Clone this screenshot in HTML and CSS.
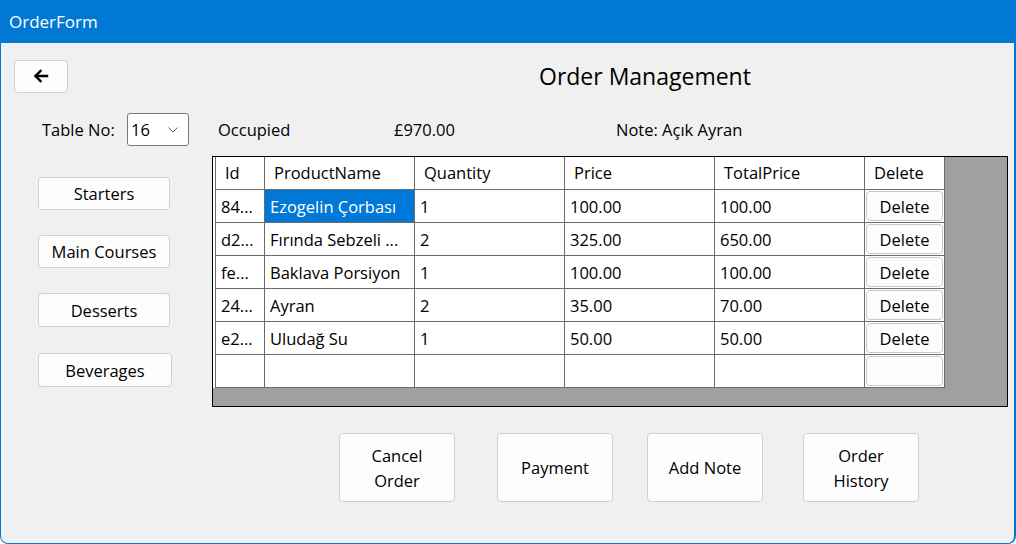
FILE: index.html
```html
<!DOCTYPE html>
<html>
<head>
<meta charset="utf-8">
<link rel="stylesheet" href="styles.css">
</head>
<body>
<div class="window">
  <div class="titlebar">OrderForm</div>
  <div class="client">
    <div class="top-row">
      <button class="btn back-btn" aria-label="Back">
        <svg width="16" height="14" viewBox="0 0 16 14"><path d="M14 7H2.5M7.5 2L2.5 7L7.5 12" fill="none" stroke="#000" stroke-width="2.4" stroke-linecap="square"/></svg>
      </button>
      <h1 class="title">Order Management</h1>
    </div>
    <div class="info-row">
      <span class="label">Table No:</span>
      <div class="combo">
        <span>16</span>
        <svg width="10" height="6" viewBox="0 0 10 6"><path d="M0.5 0.5L5 5L9.5 0.5" fill="none" stroke="#606060" stroke-width="1"/></svg>
      </div>
      <span class="status">Occupied</span>
      <span class="amount">£970.00</span>
      <span class="note">Note: Açık Ayran</span>
    </div>
    <div class="main">
      <div class="categories">
        <button class="btn cat">Starters</button>
        <button class="btn cat">Main Courses</button>
        <button class="btn cat tall">Desserts</button>
        <button class="btn cat tall wide">Beverages</button>
      </div>
      <div class="grid-box">
        <div class="grid">
          <div class="cell hd first">Id</div>
          <div class="cell hd">ProductName</div>
          <div class="cell hd">Quantity</div>
          <div class="cell hd">Price</div>
          <div class="cell hd">TotalPrice</div>
          <div class="cell hd">Delete</div>

          <div class="cell first">84...</div>
          <div class="cell sel">Ezogelin Çorbası</div>
          <div class="cell">1</div>
          <div class="cell">100.00</div>
          <div class="cell">100.00</div>
          <div class="cell btncell"><button class="btn del">Delete</button></div>

          <div class="cell first">d2...</div>
          <div class="cell">Fırında Sebzeli ...</div>
          <div class="cell">2</div>
          <div class="cell">325.00</div>
          <div class="cell">650.00</div>
          <div class="cell btncell"><button class="btn del">Delete</button></div>

          <div class="cell first">fe...</div>
          <div class="cell">Baklava Porsiyon</div>
          <div class="cell">1</div>
          <div class="cell">100.00</div>
          <div class="cell">100.00</div>
          <div class="cell btncell"><button class="btn del">Delete</button></div>

          <div class="cell first">24...</div>
          <div class="cell">Ayran</div>
          <div class="cell">2</div>
          <div class="cell">35.00</div>
          <div class="cell">70.00</div>
          <div class="cell btncell"><button class="btn del">Delete</button></div>

          <div class="cell first">e2...</div>
          <div class="cell">Uludağ Su</div>
          <div class="cell">1</div>
          <div class="cell">50.00</div>
          <div class="cell">50.00</div>
          <div class="cell btncell"><button class="btn del">Delete</button></div>

          <div class="cell first"></div>
          <div class="cell"></div>
          <div class="cell"></div>
          <div class="cell"></div>
          <div class="cell"></div>
          <div class="cell btncell"><button class="btn del"></button></div>
        </div>
      </div>
    </div>
    <div class="actions">
      <button class="btn act">Cancel<br>Order</button>
      <button class="btn act">Payment</button>
      <button class="btn act">Add Note</button>
      <button class="btn act">Order<br>History</button>
    </div>
  </div>
</div>
</body>
</html>
```

FILE: styles.css
```css
html, body {
  margin: 0;
  padding: 0;
  background: #ffffff;
}
body {
  font-family: "Open Sans", "Noto Sans", "Liberation Sans", sans-serif;
  color: #000;
}
.window {
  width: 1016px;
  height: 544px;
  box-sizing: border-box;
  background: #f0f0f0;
  border: 1px solid #0078d4;
  border-top: none;
  border-right-width: 2px;
  border-radius: 0 0 8px 8px;
  overflow: hidden;
  display: flex;
  flex-direction: column;
}
.titlebar {
  height: 43px;
  flex: 0 0 43px;
  background: #0078d4;
  color: #fff;
  font-size: 17px;
  line-height: 43px;
  padding-left: 9px;
  margin: 0 -2px 0 -1px;
}
.client {
  padding: 17px 0 0 13px;
  display: flex;
  flex-direction: column;
}
.btn {
  font-family: inherit;
  font-size: 16.5px;
  color: #000;
  background: #fdfdfd;
  border: 1px solid #d0d0d0;
  border-radius: 4px;
  padding: 0;
  margin: 0;
  box-sizing: border-box;
  display: flex;
  align-items: center;
  justify-content: center;
  text-align: center;
}
.top-row {
  display: flex;
  align-items: center;
  height: 32px;
}
.back-btn {
  width: 54px;
  height: 33px;
}
.title {
  margin: 0 0 0 471px;
  font-weight: normal;
  font-size: 23px;
  line-height: 32px;
}
.info-row {
  display: flex;
  align-items: center;
  height: 33px;
  margin-top: 21px;
  font-size: 16.5px;
}
.label {
  margin-left: 28px;
  width: 85px;
}
.combo {
  width: 62px;
  height: 33px;
  box-sizing: border-box;
  border: 1px solid #7a7a7a;
  border-radius: 3px;
  background: #fff;
  display: flex;
  align-items: center;
  justify-content: space-between;
  padding: 0 10px 0 3px;
}
.combo svg { margin-top: 1px; }
.status {
  margin-left: 29px;
  width: 176px;
}
.amount {
  width: 222px;
}
.main {
  display: flex;
  margin-top: 10px;
}
.categories {
  width: 198px;
  padding: 21px 0 0 24px;
  box-sizing: border-box;
  display: flex;
  flex-direction: column;
  gap: 25px;
}
.cat {
  width: 132px;
  height: 33px;
}
.cat.tall { height: 34px; }
.cat.tall.wide { width: 134px; }
.categories .cat:nth-child(4) { margin-top: 1px; }
.grid-box {
  width: 796px;
  height: 251px;
  box-sizing: border-box;
  border: 1px solid #000;
  background: #a0a0a0;
}
.grid {
  display: grid;
  grid-template-columns: 50px 150px 150px 150px 150px 80px;
  grid-auto-rows: 33px;
  width: 730px;
  border-left: 2px solid #fff;
}
.cell {
  background: #fff;
  border-right: 1px solid #6b6b6b;
  border-bottom: 1px solid #6b6b6b;
  box-sizing: border-box;
  font-size: 16.5px;
  line-height: 33px;
  padding-left: 5px;
  white-space: nowrap;
  overflow: hidden;
}
.cell.first {
  border-left: 1px solid #6b6b6b;
}
.cell.hd {
  padding-left: 9px;
  line-height: 32px;
}
.cell.sel {
  background: #0078d7;
  color: #fff;
}
.btncell {
  padding: 1px;
  background: #fff;
}
.del {
  width: 100%;
  height: 30px;
  border-color: #c8c8c8;
  font-size: 16.5px;
}
.actions {
  display: flex;
  margin-top: 26px;
  padding-left: 325px;
}
.act {
  width: 116px;
  height: 69px;
  line-height: 25px;
}
.act:nth-child(2) { margin-left: 42px; }
.act:nth-child(3) { margin-left: 34px; }
.act:nth-child(4) { margin-left: 40px; }
```
